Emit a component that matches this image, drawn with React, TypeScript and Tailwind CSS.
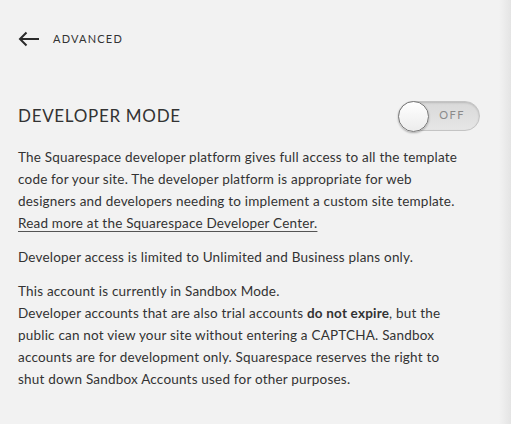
import React from 'react';

const BackArrow = () => (
  <svg width="22" height="16" viewBox="0 0 22 16" fill="none" stroke="#2b2b2b" strokeWidth="2">
    <path d="M21 8H2" />
    <path d="M8.5 1.5L2 8l6.5 6.5" />
  </svg>
);

const Toggle: React.FC = () => (
  <div className="relative w-[82px] h-[30px] rounded-full border border-[#c4c4c4] bg-gradient-to-b from-[#d9d9d9] to-[#e6e6e6] shadow-[inset_0_1px_2px_rgba(0,0,0,0.15)] flex items-center justify-end pr-[14px]">
    <span className="text-[11px] tracking-[1.5px] text-[#8a8a8a]">OFF</span>
    <div className="absolute left-[-1px] top-[-1px] w-[31px] h-[31px] rounded-full border border-[#7a7a7a] bg-gradient-to-b from-white to-[#ececec] shadow-[0_1px_2px_rgba(0,0,0,0.3)]" />
  </div>
);

export default function App() {
  return (
    <div className="relative w-[511px] h-[424px] bg-[#f2f2f2] text-[#333] font-['Lato','Liberation_Sans',sans-serif] overflow-hidden">
      <div className="absolute right-0 top-0 h-full w-[12px] bg-gradient-to-r from-transparent to-[#e4e4e4]" />
      <div className="px-[18px] pt-[31px]">
        <div className="flex items-center gap-[13px]">
          <BackArrow />
          <span className="text-[11px] tracking-[1.2px] text-[#333]">ADVANCED</span>
        </div>

        <div className="mt-[53px] flex items-center justify-between pr-[13px]">
          <h1 className="text-[17px] tracking-[0.7px] text-[#333]">DEVELOPER MODE</h1>
          <Toggle />
        </div>

        <div className="mt-[15px] text-[13.5px] leading-[22px] tracking-[0.2px] text-[#333] whitespace-nowrap">
          <p>
            The Squarespace developer platform gives full access to all the template
            <br />
            code for your site. The developer platform is appropriate for web
            <br />
            designers and developers needing to implement a custom site template.
            <br />
            <a className="underline underline-offset-[3px] decoration-[#555]">Read more at the Squarespace Developer Center.</a>
          </p>
          <p className="mt-[12px]">Developer access is limited to Unlimited and Business plans only.</p>
          <p className="mt-[12px]">
            This account is currently in Sandbox Mode.
            <br />
            Developer accounts that are also trial accounts <b className="font-bold">do not expire</b>, but the
            <br />
            public can not view your site without entering a CAPTCHA. Sandbox
            <br />
            accounts are for development only. Squarespace reserves the right to
            <br />
            shut down Sandbox Accounts used for other purposes.
          </p>
        </div>
      </div>
    </div>
  );
}
